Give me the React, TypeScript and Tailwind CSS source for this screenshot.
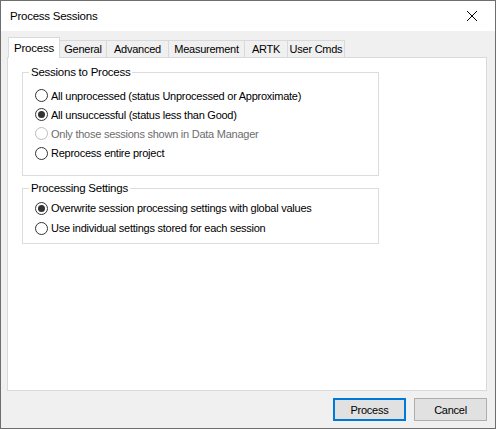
import { useState } from 'react';

type Opt = { label: string; disabled?: boolean };

const sessionOpts: Opt[] = [
  { label: 'All unprocessed (status Unprocessed or Approximate)' },
  { label: 'All unsuccessful (status less than Good)' },
  { label: 'Only those sessions shown in Data Manager', disabled: true },
  { label: 'Reprocess entire project' },
];

const settingOpts: Opt[] = [
  { label: 'Overwrite session processing settings with global values' },
  { label: 'Use individual settings stored for each session' },
];

const tabs = ['Process', 'General', 'Advanced', 'Measurement', 'ARTK', 'User Cmds'];
const tabWidths = ['w-[52px]', 'w-[48px]', 'w-[63px]', 'w-[77px]', 'w-[44px]', 'w-[58px]'];

function Radio({ checked, disabled }: { checked: boolean; disabled?: boolean }) {
  return (
    <span
      className={`flex items-center justify-center w-[13px] h-[13px] rounded-full border bg-white shrink-0 ${
        disabled ? 'border-[#bcbcbc]' : 'border-[#333333]'
      }`}
    >
      {checked && <span className="w-[7px] h-[7px] rounded-full bg-[#333333]" />}
    </span>
  );
}

function RadioRow({
  opt,
  checked,
  onPick,
  tall,
}: {
  opt: Opt;
  checked: boolean;
  onPick: () => void;
  tall?: boolean;
}) {
  return (
    <div
      onClick={() => !opt.disabled && onPick()}
      className={`flex items-center ${tall ? 'h-[20px]' : 'h-[19px]'} pl-[12px] gap-[3px] cursor-default whitespace-nowrap`}
    >
      <Radio checked={checked} disabled={opt.disabled} />
      <span className={opt.disabled ? 'text-[#6d6d6d]' : 'text-black'}>{opt.label}</span>
    </div>
  );
}

function App() {
  const [sessions, setSessions] = useState(1);
  const [setting, setSetting] = useState(0);
  const [tab, setTab] = useState(0);

  return (
    <div
      className="w-[496px] h-[429px] flex flex-col border border-[#6e6e6e] bg-[#f0f0f0] text-[11px] leading-[16px] tracking-[-0.25px] text-black select-none"
      style={{ fontFamily: '"Liberation Sans", Arial, sans-serif' }}
    >
      {/* Title bar */}
      <div className="h-[30px] bg-white flex items-center justify-between shrink-0">
        <span className="pl-[9px] text-[11.5px]">Process Sessions</span>
        <div className="w-[46px] h-[30px] flex items-center justify-center">
          <svg width="10" height="10" viewBox="0 0 10 10" className="mr-[1px]">
            <path d="M0 0L10 10M10 0L0 10" stroke="#000" strokeWidth="1" />
          </svg>
        </div>
      </div>

      {/* Body */}
      <div className="flex-1 flex flex-col pl-[6px] pr-[8px] pt-[7px] pb-[7px]">
        {/* Tabs */}
        <div className="flex items-end h-[20px] pl-[1px]">
          {tabs.map((t, i) => (
            <div
              key={t}
              onClick={() => setTab(i)}
              className={`${tabWidths[i]} flex justify-center whitespace-nowrap border border-[#d9d9d9] ${
                i === tab
                  ? 'h-[21px] bg-white border-b-0 relative z-10 items-start pt-[2px] text-[11.5px]'
                  : 'h-[18px] bg-[#f0f0f0] -ml-[1px] first:ml-0 items-center'
              }`}
            >
              {t}
            </div>
          ))}
        </div>

        {/* Panel */}
        <div className="h-[334px] -mt-[1px] bg-white border border-[#d9d9d9] pl-[14px] pt-[6px]">
          <fieldset className="w-[357px] border border-[#dcdcdc] pb-[12px]">
            <legend className="ml-[6px] px-[2px] text-[11.5px]">Sessions to Process</legend>
            <div className="pt-[6px]">
              {sessionOpts.map((o, i) => (
                <RadioRow
                  key={o.label}
                  opt={o}
                  checked={sessions === i}
                  onPick={() => setSessions(i)}
                  tall={i === 3}
                />
              ))}
            </div>
          </fieldset>

          <fieldset className="w-[357px] mt-[4px] border border-[#dcdcdc] pb-[5px]">
            <legend className="ml-[6px] px-[2px] text-[11.5px]">Processing Settings</legend>
            <div className="pt-[2px]">
              {settingOpts.map((o, i) => (
                <RadioRow
                  key={o.label}
                  opt={o}
                  checked={setting === i}
                  onPick={() => setSetting(i)}
                  tall
                />
              ))}
            </div>
          </fieldset>
        </div>

        {/* Buttons */}
        <div className="flex justify-end gap-[8px] mt-[7px]">
          <button className="w-[73px] h-[23px] bg-[#e1e1e1] border-2 border-[#0078d7] flex items-center justify-center">
            Process
          </button>
          <button className="w-[73px] h-[23px] bg-[#e1e1e1] border border-[#adadad] flex items-center justify-center">
            Cancel
          </button>
        </div>
      </div>
    </div>
  );
}

export default App;
